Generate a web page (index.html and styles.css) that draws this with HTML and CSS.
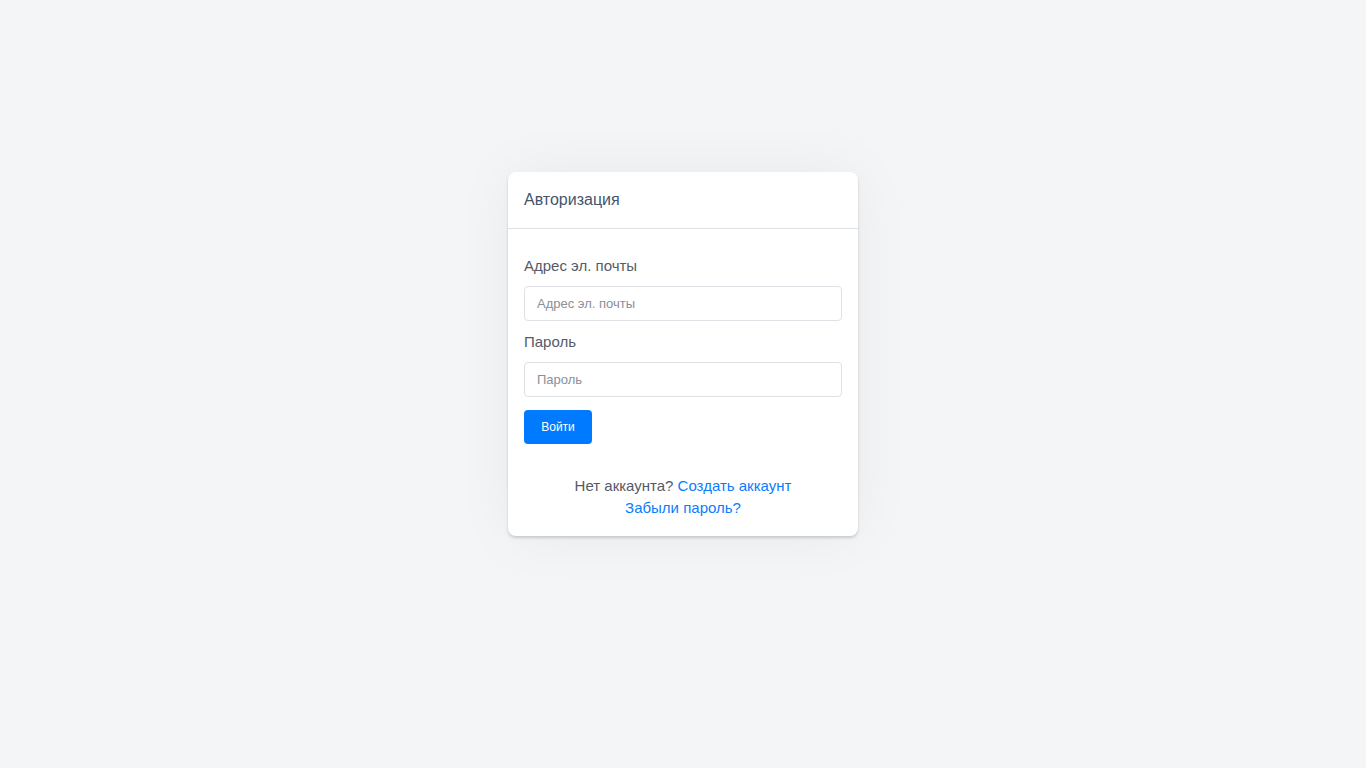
FILE: index.html
```html
<!DOCTYPE html>
<html lang="ru">
<head>
<meta charset="utf-8">
<title>Авторизация</title>
<link rel="stylesheet" href="styles.css">
</head>
<body>
<main class="page">
  <section class="card">
    <header class="card-header">Авторизация</header>
    <form class="card-body">
      <label class="label" for="email">Адрес эл. почты</label>
      <input class="input" id="email" type="email" placeholder="Адрес эл. почты">
      <label class="label" for="password">Пароль</label>
      <input class="input" id="password" type="password" placeholder="Пароль">
      <button class="btn" type="button">Войти</button>
      <div class="footer">
        <div>Нет аккаунта? <a href="#">Создать аккаунт</a></div>
        <div><a href="#">Забыли пароль?</a></div>
      </div>
    </form>
  </section>
</main>
</body>
</html>
```
FILE: styles.css
```css
* { box-sizing: border-box; }
html, body { margin: 0; height: 100%; }
body {
  background: #f4f5f7;
  font-family: "Liberation Sans", Arial, sans-serif;
  color: #555b66;
}
.page {
  height: 100%;
  padding-bottom: 60px;
  display: flex;
  align-items: center;
  justify-content: center;
}
.card {
  width: 350px;
  background: #fff;
  border-radius: 8px;
  box-shadow: 0 2px 3px rgba(0,0,0,0.16), 0 0 60px rgba(0,0,0,0.05);
}
.card-header {
  height: 57px;
  padding: 0 16px;
  display: flex;
  align-items: center;
  font-size: 16px;
  color: #44546c;
  border-bottom: 1px solid #dfe1e6;
}
.card-body {
  padding: 25px 16px 17px;
  display: flex;
  flex-direction: column;
}
.label {
  font-size: 15px;
  line-height: 24px;
  color: #555b66;
  margin-bottom: 8px;
}
.input {
  height: 35px;
  border: 1px solid #dfe1e6;
  border-radius: 4px;
  padding: 0 12px;
  font: inherit;
  font-size: 13px;
  color: #333;
  margin-bottom: 9px;
  outline: none;
}
.input::placeholder { color: #8a8f98; }
.btn {
  align-self: flex-start;
  margin-top: 4px;
  height: 34px;
  width: 68px;
  border: none;
  border-radius: 4px;
  background: #007bff;
  color: #fff;
  font: inherit;
  font-size: 12px;
  padding-bottom: 2px;
}
.footer {
  margin-top: 31px;
  text-align: center;
  font-size: 15px;
  line-height: 22px;
  color: #555b66;
}
.footer a { color: #0a7cff; text-decoration: none; }
```
